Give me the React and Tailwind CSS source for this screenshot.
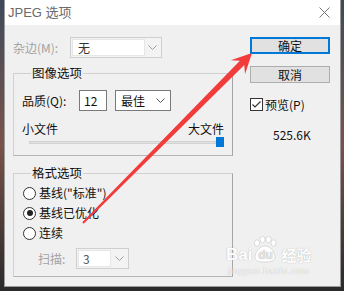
import React from "react";

const Chevron = ({ color = "#8a8a8a" }) => (
  <svg width="9" height="5" viewBox="0 0 9 5" fill="none">
    <path d="M0.5 0.5 L4.5 4.5 L8.5 0.5" stroke={color} strokeWidth="1" />
  </svg>
);

const Radio = ({ checked }) => (
  <div className="w-[13px] h-[13px] rounded-full border border-[#333] bg-white flex items-center justify-center">
    {checked && <div className="w-[6px] h-[6px] rounded-full bg-[#222]" />}
  </div>
);

export default function App() {
  return (
    <div className="relative w-[344px] h-[291px] overflow-hidden bg-gradient-to-b from-[#3c4a5c] via-[#7a5249] to-[#2a2a2a] font-['Noto_Sans_CJK_SC',sans-serif] text-[12px] leading-[16px] text-[#111]">
      <div className="ml-[4px] w-[337px] h-[287px] bg-[#f0f0f0] flex flex-col border-x border-b border-[#9a9a9a]">
        {/* title bar */}
        <div className="h-[25px] bg-white flex items-center justify-between pl-[3px] pr-[10px] shrink-0">
          <span className="text-[13px] text-[#6a6a6a] font-['Liberation_Sans','Noto_Sans_CJK_SC',sans-serif]">
            JPEG 选项
          </span>
          <svg width="11" height="11" viewBox="0 0 11 11">
            <path d="M0.5 0.5 L10.5 10.5 M10.5 0.5 L0.5 10.5" stroke="#777" strokeWidth="1" />
          </svg>
        </div>

        {/* body */}
        <div className="flex pl-[8px] pt-[12px]">
          {/* left column */}
          <div className="w-[220px] flex flex-col">
            <div className="flex items-center h-[21px]">
              <span className="w-[57px] text-[#a3a3a3]">杂边(M):</span>
              <div className="w-[92px] h-[21px] border border-[#cfcfcf] bg-[#f3f3f3] flex items-center p-[1px]">
                <div className="w-[73px] h-full bg-white border border-[#e6e6e6] flex items-center pl-[5px] text-[#333]">
                  无
                </div>
                <div className="flex-1 flex items-center justify-center">
                  <Chevron color="#a0a0a0" />
                </div>
              </div>
            </div>

            {/* group 1 */}
            <div className="relative mt-[15px] h-[83px] border border-[#d0d0d0] border-r-[#a5a5a5] border-b-[#b5b5b5] pl-[8px] pt-[16px] pr-[8px]">
              <span className="absolute -top-[9px] left-[17px] bg-[#f0f0f0] px-[1px] text-[12.5px]">图像选项</span>
              <div className="flex items-center h-[21px]">
                <span className="w-[57px]">品质(Q):</span>
                <div className="w-[28px] h-[21px] border border-[#7a7a7a] bg-white flex items-center pl-[4px]">12</div>
                <div className="ml-[8px] w-[56px] h-[21px] border border-[#7a7a7a] bg-white flex items-center justify-between pl-[5px] pr-[5px]">
                  <span>最佳</span>
                  <Chevron color="#555" />
                </div>
              </div>
              <div className="mt-[10px] flex justify-between">
                <span>小文件</span>
                <span>大文件</span>
              </div>
              <div className="ml-[7px] mr-0 h-[10px] flex items-center">
                <div className="flex-1 h-[3px] bg-[#e2e2e2] border border-[#d2d2d2]" />
                <div className="w-[8px] h-[10px] bg-[#0078d7]" />
              </div>
            </div>

            {/* group 2 */}
            <div className="relative mt-[17px] h-[104px] border border-[#d0d0d0] border-r-[#a5a5a5] border-b-[#b5b5b5] pl-[9px] pt-[9px]">
              <span className="absolute -top-[9px] left-[17px] bg-[#f0f0f0] px-[1px] text-[12.5px]">格式选项</span>
              <div className="h-[20px] flex items-center gap-[3px]">
                <Radio />
                <span>基线("标准")</span>
              </div>
              <div className="h-[20px] flex items-center gap-[3px]">
                <Radio checked />
                <span>基线已优化</span>
              </div>
              <div className="h-[20px] flex items-center gap-[3px]">
                <Radio />
                <span>连续</span>
              </div>
              <div className="mt-[5px] ml-[15px] flex items-center h-[21px]">
                <span className="w-[38px] text-[#a3a3a3]">扫描:</span>
                <div className="w-[53px] h-[21px] border border-[#cfcfcf] bg-[#f3f3f3] flex items-center p-[1px]">
                  <div className="w-[33px] h-full bg-white border border-[#e6e6e6] flex items-center pl-[4px] text-[#555]">
                    3
                  </div>
                  <div className="flex-1 flex items-center justify-center">
                    <Chevron color="#a0a0a0" />
                  </div>
                </div>
              </div>
            </div>
          </div>

          {/* right column */}
          <div className="ml-[17px] w-[80px] flex flex-col">
            <div className="h-[17px] border-2 border-[#0078d7] bg-[#e1e1e1] flex items-center justify-center">确定</div>
            <div className="mt-[12px] h-[17px] border border-[#adadad] bg-[#e1e1e1] flex items-center justify-center">取消</div>
            <div className="mt-[15px] flex items-center gap-[2px] h-[13px]">
              <div className="w-[13px] h-[13px] border border-[#333] bg-white flex items-center justify-center">
                <svg width="11" height="11" viewBox="0 0 11 11">
                  <path d="M1.5 5.5 L4 8 L9.5 2.5" stroke="#333" strokeWidth="1.2" fill="none" />
                </svg>
              </div>
              <span>预览(P)</span>
            </div>
            <div className="mt-[16px] ml-[23px] text-[12px]">525.6K</div>
          </div>
        </div>
      </div>

      {/* Baidu watermark */}
      <div className="absolute left-[226px] top-[236px] flex flex-col items-center text-white [text-shadow:0_0_1px_#a0a0a0]">
        <div className="flex items-end">
          <span className="text-[17px] leading-[17px] font-bold font-['Liberation_Sans',sans-serif]">Bai</span>
          <div className="relative w-[26px] h-[27px] flex items-end justify-center">
            <svg className="absolute left-0 top-0" width="26" height="27" viewBox="0 0 26 27">
              <g fill="white" stroke="#c4c4c4" strokeWidth="0.6">
                <ellipse cx="5" cy="7" rx="2.6" ry="3.2" />
                <ellipse cx="10.5" cy="3.5" rx="2.6" ry="3.2" />
                <ellipse cx="16.5" cy="3.5" rx="2.6" ry="3.2" />
                <ellipse cx="21.5" cy="7" rx="2.6" ry="3.2" />
                <path d="M13 10 C7 10 3 17 3 21 C3 25 7 26 13 26 C19 26 23 25 23 21 C23 17 19 10 13 10 Z" />
              </g>
            </svg>
            <span className="relative text-[12px] leading-[14px] font-bold text-[#e6e6e6] font-['Liberation_Sans',sans-serif] mb-[1px]">du</span>
          </div>
          <span className="ml-[3px] text-[15px] leading-[17px] font-bold">经验</span>
        </div>
        <span className="mt-[3px] text-[9px] leading-[10px] font-['Liberation_Sans',sans-serif] tracking-[0.5px]">jingyan.baidu.com</span>
      </div>

      {/* red arrow */}
      <svg className="absolute inset-0 pointer-events-none" width="344" height="291" viewBox="0 0 344 291">
        <polygon
          points="82.3,222.3 239.9,60.7 230.8,60.2 252,53 245,74.2 244.3,65.1 83.7,223.7"
          fill="#f23b3b"
        />
      </svg>
    </div>
  );
}
